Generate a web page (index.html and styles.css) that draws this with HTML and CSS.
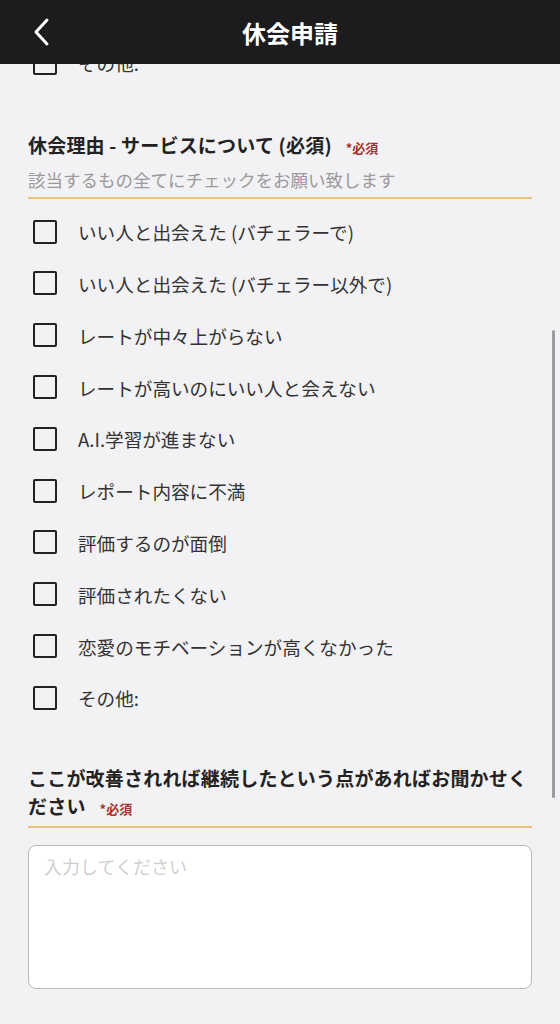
FILE: index.html
```html
<!DOCTYPE html>
<html lang="ja">
<head>
  <meta charset="UTF-8" />
  <meta name="viewport" content="width=device-width, initial-scale=1" />
  <title>休会申請</title>
  <link rel="stylesheet" href="styles.css">
</head>
<body>
  <header class="nav">
    <a class="back" href="#" aria-label="戻る">
      <svg width="18" height="30" viewBox="0 0 18 30">
        <path d="M15 3 L4 15 L15 27" fill="none" stroke="#fff" stroke-width="3" stroke-linecap="round" stroke-linejoin="round"/>
      </svg>
    </a>
    <h1>休会申請</h1>
  </header>

  <main class="scroll">
    <div class="content">
      <!-- 前の質問の続き -->
      <div class="options prev">
        <label class="option"><span class="box"></span>その他:</label>
      </div>

      <section class="group first">
        <div class="q-head">
          <h2>休会理由 - サービスについて (必須)<span class="req">*必須</span></h2>
          <p class="hint">該当するもの全てにチェックをお願い致します</p>
        </div>
        <div class="options">
          <label class="option"><span class="box"></span>いい人と出会えた (バチェラーで)</label>
          <label class="option"><span class="box"></span>いい人と出会えた (バチェラー以外で)</label>
          <label class="option"><span class="box"></span>レートが中々上がらない</label>
          <label class="option"><span class="box"></span>レートが高いのにいい人と会えない</label>
          <label class="option"><span class="box"></span>A.I.学習が進まない</label>
          <label class="option"><span class="box"></span>レポート内容に不満</label>
          <label class="option"><span class="box"></span>評価するのが面倒</label>
          <label class="option"><span class="box"></span>評価されたくない</label>
          <label class="option"><span class="box"></span>恋愛のモチベーションが高くなかった</label>
          <label class="option"><span class="box"></span>その他:</label>
        </div>
      </section>

      <section class="group">
        <div class="q-head">
          <h2>ここが改善されれば継続したという点があればお聞かせください<span class="req">*必須</span></h2>
        </div>
        <textarea class="answer" placeholder="入力してください"></textarea>
      </section>
    </div>
    <div class="scrollbar"></div>
  </main>
</body>
</html>
```

FILE: styles.css
```css
* {
  box-sizing: border-box;
}
body {
  margin: 0;
  background: #f2f1f4;
  font-family: "Noto Sans CJK JP", "Noto Sans", sans-serif;
  color: #2b2b2b;
}
.nav {
  height: 64px;
  background: #1c1b1e;
  display: flex;
  align-items: center;
  justify-content: center;
  padding-left: 20px;
  position: relative;
  z-index: 2;
}
.nav h1 {
  margin: 0;
  color: #fff;
  font-size: 24px;
  font-weight: bold;
}
.back {
  position: absolute;
  left: 32px;
  top: 17px;
}
.scroll {
  height: 960px;
  overflow: hidden;
  position: relative;
}
.content {
  margin-top: -27px;
  padding: 0 28px;
}
.group {
  margin-top: 40px;
}
.group.first {
  margin-top: 42px;
}
.q-head {
  border-bottom: 2px solid #ecc27a;
  padding-bottom: 3px;
}
h2 {
  margin: 0;
  font-size: 19px;
  letter-spacing: 0.2px;
  line-height: 28px;
  font-weight: bold;
  color: #222;
}
.req {
  color: #a83232;
  font-size: 13px;
  letter-spacing: 0;
  margin-left: 14px;
  font-weight: bold;
}
.hint {
  margin: 4px 0 0;
  font-size: 17.5px;
  line-height: 28px;
  color: #9a999c;
}
.options {
  padding-top: 7px;
}
.prev {
  padding-top: 0;
}
.option {
  display: flex;
  align-items: center;
  height: 51.8px;
  font-size: 18.6px;
  color: #333;
}
.box {
  width: 24px;
  height: 24px;
  border: 2.5px solid #222;
  border-radius: 2px;
  margin-left: 5px;
  margin-right: 21px;
  flex-shrink: 0;
}
.answer {
  display: block;
  width: 100%;
  height: 144px;
  margin-top: 17px;
  padding: 8px 15px;
  border: 1px solid #b9b8bc;
  border-radius: 8px;
  background: #fff;
  font-family: inherit;
  font-size: 18px;
  line-height: 24px;
  resize: none;
}
.answer::placeholder {
  color: #cfcfd2;
}
.scrollbar {
  position: absolute;
  right: 5px;
  top: 266px;
  width: 3px;
  height: 468px;
  border-radius: 2px;
  background: #9c9b9f;
}
```
